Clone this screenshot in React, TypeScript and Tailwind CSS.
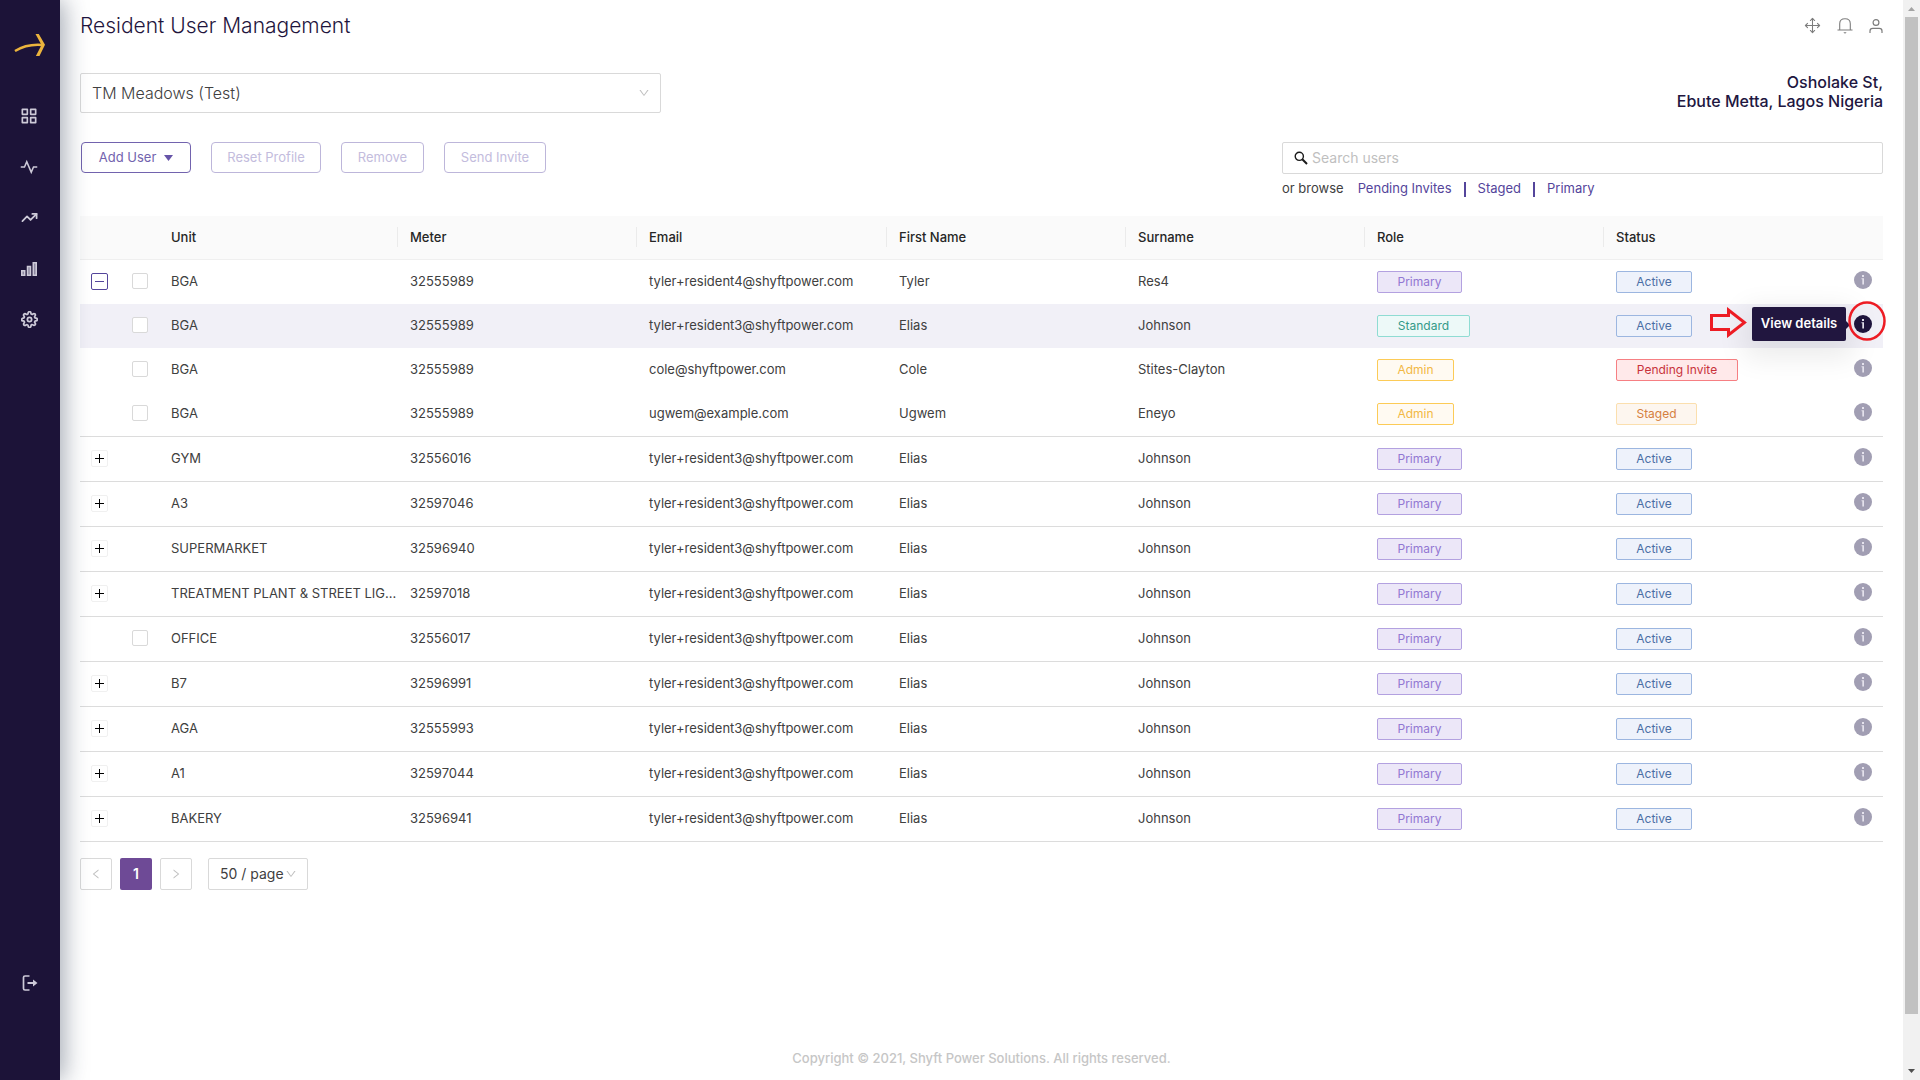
import { useState } from "react";
import { Move, TrendingUp } from "lucide-react";
import { RiFunctionLine, RiPulseLine } from "react-icons/ri";
import { FiSettings } from "react-icons/fi";
import { AiOutlineDown, AiOutlineLeft, AiOutlineRight } from "react-icons/ai";
import clsx from "clsx";

type TRole = "Primary" | "Standard" | "Admin";
type TStatus = "Active" | "Pending Invite" | "Staged";

interface TResident {
  unit: string;
  meter: string;
  email: string;
  firstName: string;
  surname: string;
  role: TRole;
  status: TStatus;
  toggle?: "open" | "closed";
  selectable?: boolean;
  lastInGroup?: boolean;
  hovered?: boolean;
}

const elias = (
  unit: string,
  meter: string,
  toggle?: "open" | "closed"
): TResident => ({
  unit,
  meter,
  email: "tyler+resident3@shyftpower.com",
  firstName: "Elias",
  surname: "Johnson",
  role: "Primary",
  status: "Active",
  toggle,
  lastInGroup: true,
});

const residents: TResident[] = [
  {
    ...elias("BGA", "32555989", "open"),
    email: "tyler+resident4@shyftpower.com",
    firstName: "Tyler",
    surname: "Res4",
    selectable: true,
    lastInGroup: false,
  },
  {
    ...elias("BGA", "32555989"),
    role: "Standard",
    selectable: true,
    lastInGroup: false,
    hovered: true,
  },
  {
    unit: "BGA",
    meter: "32555989",
    email: "cole@shyftpower.com",
    firstName: "Cole",
    surname: "Stites-Clayton",
    role: "Admin",
    status: "Pending Invite",
    selectable: true,
  },
  {
    unit: "BGA",
    meter: "32555989",
    email: "ugwem@example.com",
    firstName: "Ugwem",
    surname: "Eneyo",
    role: "Admin",
    status: "Staged",
    selectable: true,
    lastInGroup: true,
  },
  elias("GYM", "32556016", "closed"),
  elias("A3", "32597046", "closed"),
  elias("SUPERMARKET", "32596940", "closed"),
  elias("TREATMENT PLANT & STREET LIG...", "32597018", "closed"),
  { ...elias("OFFICE", "32556017"), selectable: true },
  elias("B7", "32596991", "closed"),
  elias("AGA", "32555993", "closed"),
  elias("A1", "32597044", "closed"),
  elias("BAKERY", "32596941", "closed"),
];

const tagStyles: Record<TRole | TStatus, string> = {
  Primary: "w-[85px] bg-[#ece7f8] border-[#b3a1e0] text-[#9277d3]",
  Standard: "w-[93px] bg-[#edf9f8] border-[#8fdcd3] text-[#349a89]",
  Admin: "w-[77px] bg-[#fffaf2] border-[#fccb57] text-[#f2b844]",
  Active: "w-[76px] bg-[#eef2fb] border-[#9cb6e0] text-[#4a6ea5]",
  "Pending Invite": "w-[122px] bg-[#ffe9ea] border-[#f67f83] text-[#c8323a]",
  Staged: "w-[81px] bg-[#fdf6ef] border-[#fbdfae] text-[#d5803f]",
};

function Tag({ label }: { label: TRole | TStatus }) {
  return (
    <span
      className={clsx(
        "inline-flex h-[22px] items-center justify-center rounded-xs border text-xs whitespace-nowrap",
        tagStyles[label]
      )}
    >
      {label}
    </span>
  );
}

function BarsIcon() {
  return (
    <svg viewBox="0 0 16 14" className="h-[14px] w-4" fill="none" stroke="currentColor">
      <path
        d="M.75 8.750h3v4.500h-3zM6.500 4.500h3v8.750h-3zM12.250.75h3v12.500h-3z"
        fill="#8d88a0"
        strokeWidth="1.500"
      />
    </svg>
  );
}

function LogoutIcon() {
  return (
    <svg viewBox="0 0 16 16" className="size-4" fill="none" stroke="currentColor">
      <path d="M7.500 1H3a1.500 1.500 0 0 0-1.500 1.500v11A1.500 1.500 0 0 0 3 15h4.500" strokeWidth="1.700" />
      <path d="M5.500 8H13" strokeWidth="2" />
      <path d="M11 4.500 15.500 8 11 11.500z" fill="currentColor" stroke="none" />
    </svg>
  );
}

function BellIcon() {
  return (
    <svg viewBox="0 0 16 16" className="size-4" fill="none" stroke="currentColor">
      <path d="M.5 12h15M2.700 12V5.700C2.700 2.600 4.800.7 8 .7s5.300 1.900 5.300 5V12" strokeWidth="1.100" />
      <path d="M6.300 14.200h3.400L8 15.800z" fill="currentColor" stroke="none" />
    </svg>
  );
}

function UserIcon() {
  return (
    <svg viewBox="0 0 14 14" className="size-[14px]" fill="none" stroke="currentColor">
      <circle cx="7" cy="3.500" r="2.900" strokeWidth="1.200" />
      <path d="M1 14v-2c0-1.700 1-2.700 2.700-2.700h6.600c1.700 0 2.700 1 2.700 2.700v2" strokeWidth="1.200" />
    </svg>
  );
}

function SearchIcon() {
  return (
    <svg viewBox="0 0 14 14" className="size-[14px]" fill="none" stroke="#1a1a1a">
      <circle cx="5.300" cy="5.300" r="4.100" strokeWidth="1.400" />
      <path d="M8.300 8.300 13 13" strokeWidth="2" />
    </svg>
  );
}

function InfoIcon() {
  return (
    <svg viewBox="0 0 18 18" className="size-[18px]">
      <circle cx="9" cy="9" r="9" fill="currentColor" />
      <path d="M8 4h2v2H8zM7.500 7.300H10V13.500H8.300V8.300H7.500z" fill="#e4e2ec" />
    </svg>
  );
}

const navItems = [
  { label: "Dashboard", icon: <RiFunctionLine className="size-5" /> },
  { label: "Activity", icon: <RiPulseLine className="size-[18px]" /> },
  { label: "Trends", icon: <TrendingUp className="size-[17px]" strokeWidth={2.5} /> },
  { label: "Reports", icon: <BarsIcon /> },
  { label: "Settings", icon: <FiSettings className="size-[17px]" strokeWidth={2.5} /> },
];

function Sidebar() {
  return (
    <aside className="z-10 flex w-[60px] shrink-0 flex-col items-center bg-[#1c1338] text-[#cdcad8] shadow-[4px_0_25px_rgba(25,40,65,0.4)]">
      <a href="#home" aria-label="Home" className="mt-8 block">
        <svg viewBox="0 0 32 26" className="h-[26px] w-8" fill="none" stroke="#ecb43d">
          <path d="M1 19C9 14 18 12 29 13" strokeWidth="2.500" />
          <path d="M21.500 2h3.300L31 12.800 25.500 24h-3.600L27.500 13z" fill="#ecb43d" stroke="none" />
        </svg>
      </a>
      <nav className="mt-8 flex flex-col self-start">
        {navItems.map((item) => (
          <a
            key={item.label}
            href={`#${item.label.toLowerCase()}`}
            aria-label={item.label}
            className="flex h-[51px] w-[58px] items-center justify-center hover:text-white"
          >
            {item.icon}
          </a>
        ))}
      </nav>
      <button type="button" aria-label="Log out" className="mt-auto mb-[89px] hover:text-white">
        <LogoutIcon />
      </button>
    </aside>
  );
}

function RowAction({ hovered }: { hovered?: boolean }) {
  return (
    <div className="relative mb-1 size-[18px]">
      <button
        type="button"
        aria-label="View details"
        className={clsx("block", hovered ? "text-[#1f153d]" : "text-[#a19eb3]")}
      >
        <InfoIcon />
      </button>
      {hovered && (
        <>
          {/* Tooltip */}
          <div
            role="tooltip"
            className="absolute -top-2 right-[26px] flex h-[34px] w-[94px] items-center justify-center rounded-xs bg-[#21163f] text-[13px] font-semibold whitespace-nowrap text-white shadow-[0_9px_28px_8px_rgba(0,0,0,0.08)]"
          >
            View details
            <span className="absolute top-3.5 left-full border-y-4 border-l-4 border-y-transparent border-l-[#21163f]" />
          </div>
          {/* Pointer */}
          <svg
            viewBox="0 0 37 31"
            className="absolute -top-2 right-[125px] h-[31px] w-[37px]"
            fill="none"
            stroke="#ed1c24"
            strokeWidth="3"
          >
            <path d="M1.500 8.500h17V3L34.500 15.500 18.500 28v-5.500h-17z" />
          </svg>
          <svg
            viewBox="0 0 38 40"
            className="pointer-events-none absolute -top-3.5 -right-3.5 h-10 w-[38px]"
            fill="none"
            stroke="#ed1c24"
            strokeWidth="2.500"
          >
            <ellipse cx="19" cy="20" rx="17.500" ry="18.500" />
          </svg>
        </>
      )}
    </div>
  );
}

function ResidentTable() {
  const columns = ["Unit", "Meter", "Email", "First Name", "Surname", "Role", "Status"];

  return (
    <table className="w-full table-fixed border-separate border-spacing-0 text-[13px] text-[#404040]">
      <colgroup>
        <col className="w-[39px]" />
        <col className="w-10" />
        <col />
        <col />
        <col className="w-[250px]" />
        <col />
        <col />
        <col />
        <col />
        <col className="w-10" />
      </colgroup>
      <thead>
        <tr>
          <td className="h-11 border-b border-[#efefef] bg-[#fafafa]" />
          <td className="border-b border-[#efefef] bg-[#fafafa]" />
          {columns.map((column) => (
            <th
              key={column}
              scope="col"
              className="border-b border-[#efefef] bg-[#fafafa] p-0 pb-0.5 text-left font-medium text-[#262626]"
            >
              <div className={clsx("pl-3 leading-5", column !== "Status" && "border-r border-[#ebebeb]")}>
                {column}
              </div>
            </th>
          ))}
          <td className="border-b border-[#efefef] bg-[#fafafa]" />
        </tr>
      </thead>
      <tbody>
        {residents.map((r, index) => (
          <tr
            key={index}
            className={clsx(
              r.lastInGroup ? "h-[45px] *:border-b *:border-[#dcdcdc]" : "h-11",
              r.hovered && "bg-[#f1f0f7]"
            )}
          >
            <td className="pb-px pl-[11px]">
              {r.toggle && (
                <button
                  type="button"
                  aria-label={r.toggle === "open" ? "Collapse row" : "Expand row"}
                  className={clsx(
                    "flex size-[17px] items-center justify-center rounded-xs border",
                    r.toggle === "open"
                      ? "border-[#54459b] text-[#54459b]"
                      : "border-[#f0f0f0] text-black"
                  )}
                >
                  <svg viewBox="0 0 9 9" className="size-[9px]" stroke="currentColor">
                    <path d={r.toggle === "open" ? "M0 4.500h9" : "M0 4.500h9M4.500 0v9"} />
                  </svg>
                </button>
              )}
            </td>
            <td className="pb-0.5 pl-[13px]">
              {r.selectable && (
                <input
                  type="checkbox"
                  aria-label={`Select ${r.firstName} ${r.surname}`}
                  className="block size-4 appearance-none rounded-xs border border-[#d9d9d9] bg-white checked:bg-[#6e4a96]"
                />
              )}
            </td>
            <td className="pl-3 whitespace-nowrap">{r.unit}</td>
            <td className="px-3">{r.meter}</td>
            <td className="px-3">{r.email}</td>
            <td className="px-3">{r.firstName}</td>
            <td className="px-3">{r.surname}</td>
            <td className="px-3">
              <div className="flex">
                <Tag label={r.role} />
              </div>
            </td>
            <td className="px-3">
              <div className="flex">
                <Tag label={r.status} />
              </div>
            </td>
            <td className="pl-[11px]">
              <RowAction hovered={r.hovered} />
            </td>
          </tr>
        ))}
      </tbody>
    </table>
  );
}

function Pagination() {
  return (
    <div className="mt-4 flex text-sm text-[#404040]">
      <button
        type="button"
        disabled
        aria-label="Previous page"
        className="flex size-8 items-center justify-center rounded-xs border border-[#d9d9d9] text-[#bfbfbf]"
      >
        <AiOutlineLeft className="size-3" />
      </button>
      <button
        type="button"
        className="ml-2 size-8 rounded-xs bg-[#6e4a96] font-semibold text-white"
      >
        1
      </button>
      <button
        type="button"
        disabled
        aria-label="Next page"
        className="ml-2 flex size-8 items-center justify-center rounded-xs border border-[#d9d9d9] text-[#bfbfbf]"
      >
        <AiOutlineRight className="size-3" />
      </button>
      <div className="relative ml-4">
        <select
          aria-label="Rows per page"
          className="h-8 w-[100px] appearance-none rounded-xs border border-[#d9d9d9] bg-white pl-[11px]"
        >
          <option>50 / page</option>
        </select>
        <AiOutlineDown className="pointer-events-none absolute top-2.5 right-[11px] size-3 text-[#bfbfbf]" />
      </div>
    </div>
  );
}

function ScrollTrack() {
  return (
    <div className="flex w-[17px] shrink-0 flex-col items-center bg-[#f1f1f1]">
      <svg viewBox="0 0 17 17" className="size-[17px]" fill="#a3a3a3">
        <path d="M5 11h7L8.500 7z" />
      </svg>
      <div className="w-[13px] flex-1 bg-[#c1c1c1]" />
      <svg viewBox="0 0 17 17" className="mt-[49px] size-[17px]" fill="#505050">
        <path d="M5 6h7L8.500 10z" />
      </svg>
    </div>
  );
}

export default function App() {
  const [search, setSearch] = useState("");

  return (
    <div className="flex min-h-screen bg-white font-['Inter','Liberation_Sans',sans-serif]">
      <Sidebar />

      <main className="flex min-w-0 flex-1 flex-col px-5">
        {/* Header */}
        <header className="flex h-[51px] items-center justify-between">
          <h1 className="text-[21px] font-light text-[#1f153d]">Resident User Management</h1>
          <div className="flex items-center gap-4 text-[#7d7d7d]">
            <button type="button" aria-label="Move">
              <Move className="size-[17px]" strokeWidth={1.5} />
            </button>
            <button type="button" aria-label="Notifications">
              <BellIcon />
            </button>
            <button type="button" aria-label="Account">
              <UserIcon />
            </button>
          </div>
        </header>

        {/* Site */}
        <div className="mt-[22px] flex justify-between">
          <div className="relative w-[581px]">
            <select
              aria-label="Site"
              className="h-10 w-full appearance-none rounded-xs border border-[#d9d9d9] bg-white pl-[11px] text-base font-light text-[#404040]"
            >
              <option>TM Meadows (Test)</option>
            </select>
            <AiOutlineDown className="pointer-events-none absolute top-3.5 right-[11px] size-3 text-[#bfbfbf]" />
          </div>
          <address className="text-right text-base leading-[19px] font-medium text-[#21163f] not-italic">
            Osholake St,
            <br />
            Ebute Metta, Lagos Nigeria
          </address>
        </div>

        {/* Actions & search */}
        <div className="mt-[29px] flex items-start justify-between">
          <div className="flex gap-5 pl-px text-[13px]">
            <button
              type="button"
              className="flex h-[31px] w-[110px] items-center justify-center gap-2 rounded-sm border border-[#7263ae] text-[#7263ae]"
            >
              Add User
              <svg viewBox="0 0 9 6" className="h-1.5 w-[9px]" fill="#6654a8">
                <path d="M0 0h9L4.500 6z" />
              </svg>
            </button>
            <button type="button" disabled className="h-[31px] w-[110px] rounded-sm border border-[#bdb6da] text-[#c3bcdd]">
              Reset Profile
            </button>
            <button type="button" disabled className="h-[31px] w-[83px] rounded-sm border border-[#bdb6da] text-[#c3bcdd]">
              Remove
            </button>
            <button type="button" disabled className="h-[31px] w-[102px] rounded-sm border border-[#bdb6da] text-[#c3bcdd]">
              Send Invite
            </button>
          </div>

          <div className="w-1/3 text-[13px]">
            <label className="flex h-8 items-center gap-1 rounded-xs border border-[#d9d9d9] pl-[11px]">
              <SearchIcon />
              <input
                type="text"
                aria-label="Search users"
                placeholder="Search users"
                value={search}
                onChange={(e) => setSearch(e.target.value)}
                className="flex-1 text-sm outline-none placeholder:text-[#bfbfbf]"
              />
            </label>
            <div className="mt-[5px] flex h-5 items-center text-[#54459b]">
              <span className="mr-3.5 text-[#404040]">or browse</span>
              <a href="#pending">Pending Invites</a>
              <span className="mx-3 h-[15px] w-0.5 bg-[#54459b]" />
              <a href="#staged">Staged</a>
              <span className="mx-3 h-[15px] w-0.5 bg-[#54459b]" />
              <a href="#primary">Primary</a>
            </div>
          </div>
        </div>

        <div className="mt-[17px]">
          <ResidentTable />
        </div>
        <Pagination />

        <footer className="mt-auto pb-3 text-center text-[13px] leading-5 font-medium text-[#c6c6c6]">
          Copyright © 2021, Shyft Power Solutions. All rights reserved.
        </footer>
      </main>

      <ScrollTrack />
    </div>
  );
}
